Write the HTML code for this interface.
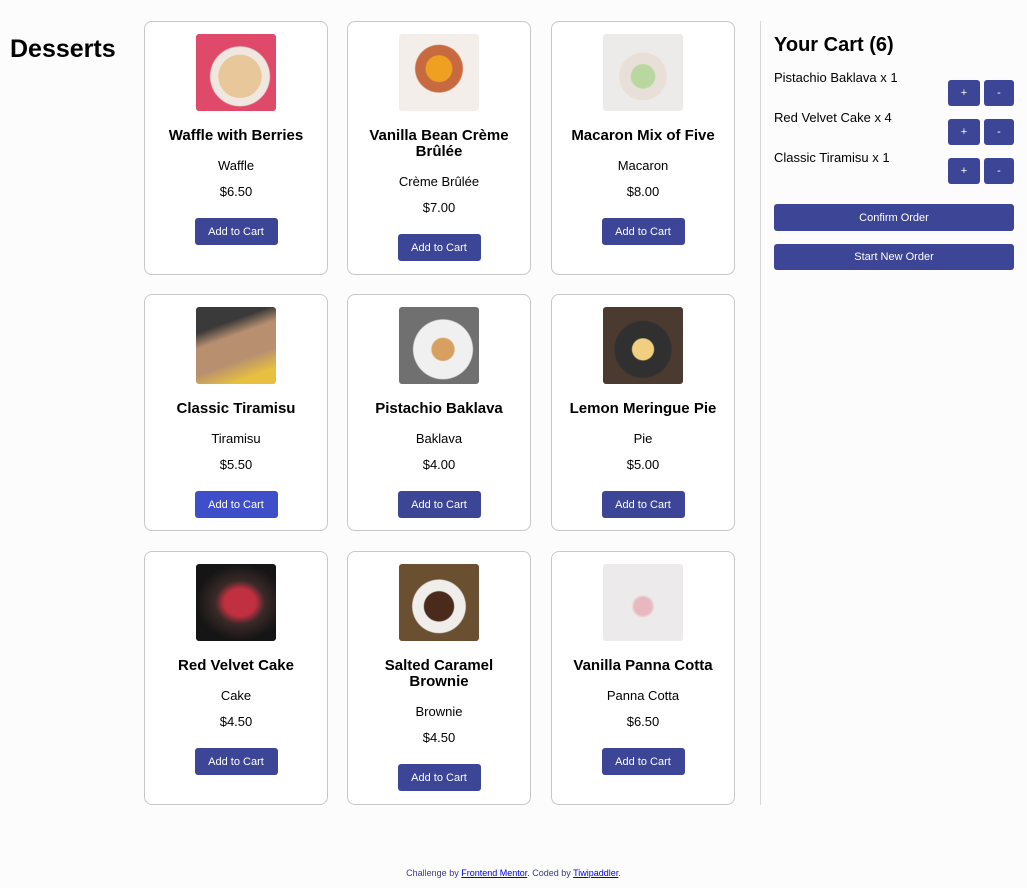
<!DOCTYPE html>
<html><head><meta charset="utf-8"><style>
*{box-sizing:border-box;margin:0;padding:0}
body{width:1027px;height:888px;background:#fcfcfc;font-family:"Liberation Sans",Arial,sans-serif;position:relative;overflow:hidden;color:#000}
h1{position:absolute;left:10px;top:35px;font-size:25px;font-weight:bold}
.card{position:absolute;width:184px;border:1px solid #c8c8c8;border-radius:8px;background:#fff;text-align:center}
.img{width:80px;height:77px;margin:12px auto 0;border-radius:3px}
.t{font-size:15px;font-weight:bold;margin-top:17px;line-height:16px;padding:0 10px}
.s{font-size:13px;margin-top:14px;line-height:15px}
.p{font-size:13px;margin-top:11px;line-height:15px}
.b{display:flex;align-items:center;justify-content:center;width:83px;height:27px;background:#3c4596;color:#fff;border-radius:3px;font-size:11px;margin:19px auto 0}
.line{position:absolute;left:760px;top:21px;width:1px;height:784px;background:#d8d8d8}
.ct{position:absolute;left:774px;top:34px;font-size:20px;font-weight:bold}
.it{position:absolute;left:774px;font-size:13px}
.sb{position:absolute;width:32px;height:26px;background:#3c4596;color:#fff;border-radius:3px;font-size:11px;display:flex;align-items:center;justify-content:center}
.wb{position:absolute;left:774px;width:240px;height:27px;background:#3c4596;color:#fff;border-radius:3px;font-size:11px;display:flex;align-items:center;justify-content:center}
.f{position:absolute;top:868px;left:0;width:1027px;text-align:center;font-size:9px;color:#3a3a8a}
.f a{color:#00e;text-decoration:underline}
</style></head><body>
<h1>Desserts</h1>

<div class="card" style="left:144px;top:21px;height:254px"><div class="img" style="background:radial-gradient(circle at 55% 55%,#e8c89a 0 35%,#f0e8e0 36% 48%,#e04a6a 50%)"></div><div class="t">Waffle with Berries</div><div class="s">Waffle</div><div class="p">$6.50</div><div class="b">Add to Cart</div></div>
<div class="card" style="left:347px;top:21px;height:254px"><div class="img" style="background:radial-gradient(circle at 50% 45%,#f0a020 0 22%,#c86a40 24% 40%,#f4eeea 42%)"></div><div class="t">Vanilla Bean Crème Brûlée</div><div class="s">Crème Brûlée</div><div class="p">$7.00</div><div class="b">Add to Cart</div></div>
<div class="card" style="left:551px;top:21px;height:254px"><div class="img" style="background:radial-gradient(circle at 50% 55%,#b8d8a0 0 20%,#e8e0d8 22% 40%,#ecebea 42%)"></div><div class="t">Macaron Mix of Five</div><div class="s">Macaron</div><div class="p">$8.00</div><div class="b">Add to Cart</div></div>

<div class="card" style="left:144px;top:294px;height:237px"><div class="img" style="background:linear-gradient(160deg,#3a3a3a 0 25%,#b89070 40% 65%,#e8c040 85%)"></div><div class="t">Classic Tiramisu</div><div class="s">Tiramisu</div><div class="p">$5.50</div><div class="b" style="background:#3f4fc9">Add to Cart</div></div>
<div class="card" style="left:347px;top:294px;height:237px"><div class="img" style="background:radial-gradient(circle at 55% 55%,#d8a060 0 18%,#f0f0f0 20% 48%,#707070 50%)"></div><div class="t">Pistachio Baklava</div><div class="s">Baklava</div><div class="p">$4.00</div><div class="b">Add to Cart</div></div>
<div class="card" style="left:551px;top:294px;height:237px"><div class="img" style="background:radial-gradient(circle at 50% 55%,#f0d080 0 18%,#303030 20% 48%,#4a3a30 50%)"></div><div class="t">Lemon Meringue Pie</div><div class="s">Pie</div><div class="p">$5.00</div><div class="b">Add to Cart</div></div>

<div class="card" style="left:144px;top:551px;height:254px"><div class="img" style="background:radial-gradient(ellipse at 55% 50%,#c03040 0 25%,#3a2a28 40%,#151515 70%)"></div><div class="t">Red Velvet Cake</div><div class="s">Cake</div><div class="p">$4.50</div><div class="b">Add to Cart</div></div>
<div class="card" style="left:347px;top:551px;height:254px"><div class="img" style="background:radial-gradient(circle at 50% 55%,#4a2a1a 0 25%,#f0eeea 27% 45%,#6a5030 47%)"></div><div class="t">Salted Caramel Brownie</div><div class="s">Brownie</div><div class="p">$4.50</div><div class="b">Add to Cart</div></div>
<div class="card" style="left:551px;top:551px;height:254px"><div class="img" style="background:radial-gradient(circle at 50% 55%,#e8b8c0 0 15%,#eceaea 20%)"></div><div class="t">Vanilla Panna Cotta</div><div class="s">Panna Cotta</div><div class="p">$6.50</div><div class="b">Add to Cart</div></div>

<div class="line"></div>
<div class="ct">Your Cart (6)</div>
<div class="it" style="top:70px">Pistachio Baklava x 1</div>
<div class="sb" style="left:948px;top:80px">+</div><div class="sb" style="left:984px;top:80px;width:30px">-</div>
<div class="it" style="top:110px">Red Velvet Cake x 4</div>
<div class="sb" style="left:948px;top:119px">+</div><div class="sb" style="left:984px;top:119px;width:30px">-</div>
<div class="it" style="top:150px">Classic Tiramisu x 1</div>
<div class="sb" style="left:948px;top:158px">+</div><div class="sb" style="left:984px;top:158px;width:30px">-</div>
<div class="wb" style="top:204px">Confirm Order</div>
<div class="wb" style="top:244px;height:26px">Start New Order</div>

<div class="f">Challenge by <a>Frontend Mentor</a>. Coded by <a>Tiwipaddler</a>.</div>
</body></html>
